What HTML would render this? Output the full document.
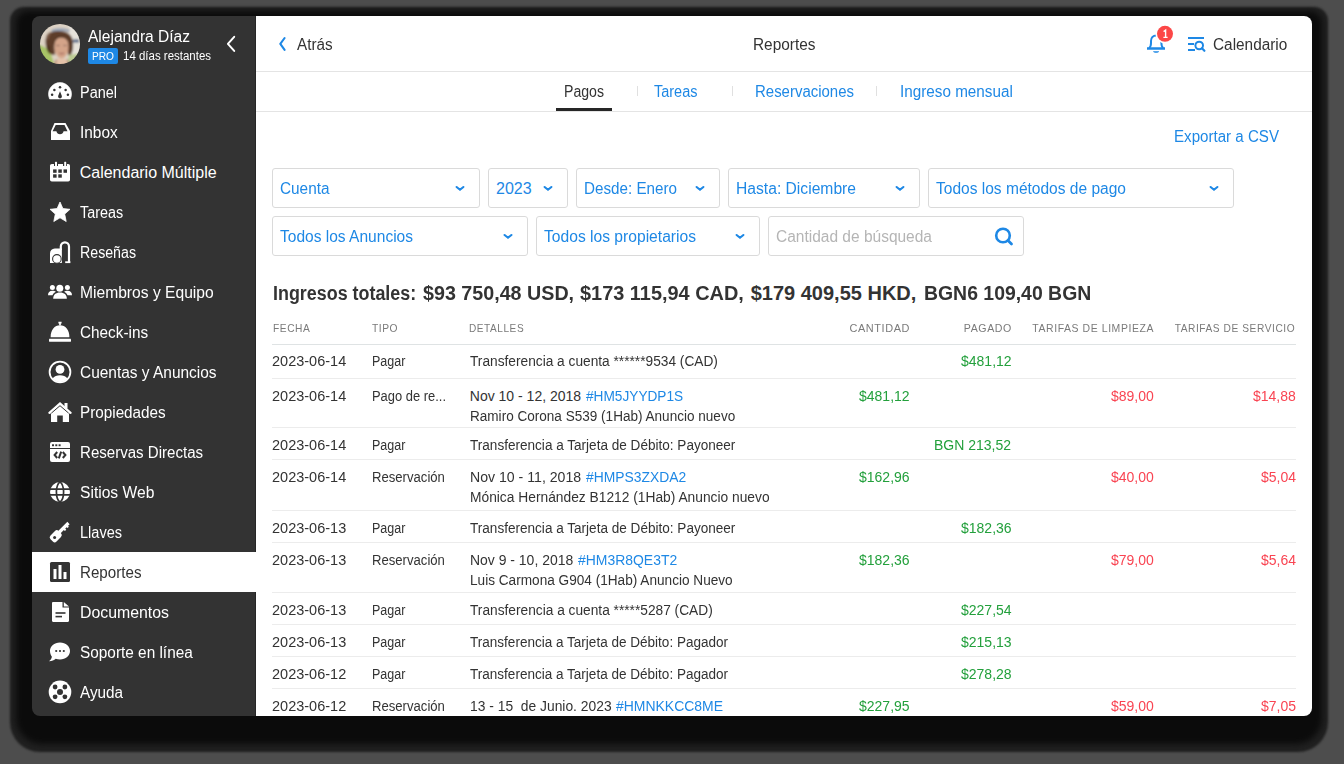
<!DOCTYPE html>
<html><head><meta charset="utf-8">
<style>
*{margin:0;padding:0;box-sizing:border-box}
html,body{width:1344px;height:764px;overflow:hidden;background:#4d4d4d;font-family:"Liberation Sans",sans-serif}
:root{--s0:0.9796;--s1:0.9941;--t1:0.9692;--s2:0.9692;--s3:1.0056;--t3:0.9855;--s4:0.9692;--s5:1.0025;--t5:0.9739;--s6:0.9802;--s7:0.9673;--s8:0.9673;--s9:0.9954;--m:0.9998}
#win{position:absolute;left:32px;top:16px;width:1280px;height:700px;border-radius:8px;overflow:hidden}
#pg{position:absolute;left:-32px;top:-16px;width:1344px;height:764px}
.g{position:absolute}
</style></head><body>
<div class="g" style="left:10px;top:7px;width:1318px;height:745px;border-radius:14px 14px 30px 30px;background:#202020;filter:blur(1px)"></div>
<div class="g" style="left:16px;top:11px;width:1306px;height:733px;border-radius:12px 12px 26px 26px;background:#0b0b0b;filter:blur(3px)"></div>
<div id="win"><div id="pg">
<div style="position:absolute;left:256px;top:16px;width:1056px;height:700px;background:#fff;"></div>
<div style="position:absolute;left:32px;top:16px;width:224px;height:700px;background:#333333;"></div>
<div style="position:absolute;left:255px;top:16px;width:1px;height:700px;background:#262626;"></div>
<div style="position:absolute;left:40px;top:24px;width:40px;height:40px;border-radius:50%;overflow:hidden">
<svg width="40" height="40" viewBox="0 0 40 40">
<defs><filter id="bl" x="-10%" y="-10%" width="120%" height="120%"><feGaussianBlur stdDeviation="0.9"/></filter></defs>
<g filter="url(#bl)">
<rect x="-2" y="-2" width="44" height="44" fill="#ddd2c4"/>
<rect x="29" y="-2" width="13" height="44" fill="#e6e2da"/>
<path d="M-2 21 C3 21 8 25 11 30 L15 42 L-2 42 Z" fill="#a8c466"/>
<path d="M29 31 L42 29 L42 42 L27 42 Z" fill="#bccb92"/>
<rect x="33" y="15.5" width="6" height="3" fill="#556685"/>
<path d="M11 6 C15 3.8 25 3.8 30 6 L29 8 C25 6.5 16 6.5 12 8 Z" fill="#98a4b6"/>
<path d="M5.5 18 C5 10 11 6.5 19 7 C27 7 33 11 33 19 C33.5 24 32.5 29 30.5 31 L28 31 L28 20 C27 15 23 13 19 14 C16 15 14.5 18 14.5 23 L15 31 C12 31 9 30 7.5 27 C6 24 5.6 21 5.5 18 Z" fill="#5d3c29"/>
<path d="M6 13 C7 9 10 7.5 12 8 C10 11 8.5 13 8 17 Z" fill="#7d5b46"/>
<path d="M9 22 C8 24 8.5 27 10 28.5" stroke="#3f2718" stroke-width="1.6" fill="none"/>
<path d="M14.5 23 C14.5 16.5 17.5 13.5 21.5 13.5 C26 13.5 28.5 17 28.5 23 C28.5 29 26 33.5 21.5 34.5 C17 33.5 14.5 29 14.5 23 Z" fill="#d4a489"/>
<path d="M16.5 21.5 L19.5 21.5 M23.5 21.5 L26.5 21.5" stroke="#6e5450" stroke-width="0.9"/>
<path d="M19.5 29 C20.5 29.8 22.5 29.8 24 29" stroke="#9c5a55" stroke-width="1.1" fill="none"/>
<path d="M15 16 C18 12.5 24 12 28 16.5 C26 13 22 11.5 18.5 12.5 C16.5 13 15.5 14.5 15 16 Z" fill="#4a2e1e"/>
<path d="M13 42 C14 36 17 34 21.5 34.5 C26 34 29 36 30 42 Z" fill="#e5c2a9"/>
<path d="M15 41 L16.3 35.5 M27.3 35.5 L28.8 41" stroke="#7a5040" stroke-width="0.8"/>
</g>
</svg></div>
<div style="position:absolute;top:27px;font-size:16px;line-height:20px;color:#fff;white-space:nowrap;left:88.00px;transform:scaleX(0.9719);transform-origin:0 0;">Alejandra Díaz</div>
<div style="position:absolute;left:88px;top:48px;width:29.5px;height:16px;background:#1e88e5;border-radius:2px"></div>
<div style="position:absolute;top:46px;font-size:11px;line-height:20px;color:#fff;white-space:nowrap;left:92.00px;transform:scaleX(0.9229);transform-origin:0 0;">PRO</div>
<div style="position:absolute;top:46px;font-size:12px;line-height:20px;color:#fff;white-space:nowrap;left:122.50px;transform:scaleX(0.9560);transform-origin:0 0;">14 días restantes</div>
<svg style="position:absolute;left:224px;top:34px" width="14" height="20" viewBox="0 0 14 20"><path d="M10.2 2.8 L3.9 9.9 L10.2 16.9" stroke="#fff" stroke-width="2" fill="none" stroke-linecap="round" stroke-linejoin="round"/></svg>
<div style="position:absolute;top:83px;font-size:16px;line-height:20px;color:#fff;white-space:nowrap;left:79.70px;transform:scaleX(0.9040);transform-origin:0 0;">Panel</div>
<svg style="position:absolute;left:48px;top:80px" width="24" height="24" viewBox="0 0 24 24"><path d="M1.6 19 A11.5 11.5 0 1 1 22.4 19 Z" fill="#fff" stroke="#fff" stroke-width="0.6" stroke-linejoin="round"/>
<circle cx="12" cy="7.2" r="1.25" fill="#333333"/><circle cx="6.4" cy="9.9" r="1.25" fill="#333333"/><circle cx="17.6" cy="9.9" r="1.25" fill="#333333"/>
<circle cx="4.1" cy="14.8" r="1.25" fill="#333333"/><circle cx="19.9" cy="14.8" r="1.25" fill="#333333"/>
<path d="M12 11.3 L13.7 15.6 A1.9 1.9 0 1 1 10.3 15.6 Z" fill="#333333"/></svg>
<div style="position:absolute;top:123px;font-size:16px;line-height:20px;color:#fff;white-space:nowrap;left:79.70px;transform:scaleX(0.9633);transform-origin:0 0;">Inbox</div>
<svg style="position:absolute;left:48px;top:120px" width="24" height="24" viewBox="0 0 24 24"><path d="M6.5 3 L17.5 3 L22 11 L22 20 L3 20 L3 11 Z" fill="#fff"/>
<path d="M7.7 5 L16.5 5 L19.5 11.2 L15.6 11.2 C15.2 13 13.8 14.2 12 14.2 C10.2 14.2 8.8 13 8.4 11.2 L4.6 11.2 Z" fill="#333333"/></svg>
<div style="position:absolute;top:163px;font-size:16px;line-height:20px;color:#fff;white-space:nowrap;left:79.70px;">Calendario Múltiple</div>
<svg style="position:absolute;left:48px;top:160px" width="24" height="24" viewBox="0 0 24 24"><rect x="2" y="4" width="20" height="17.5" rx="1.8" fill="#fff"/>

<rect x="5.1" y="9.4" width="3.5" height="3.4" fill="#333333"/><rect x="10.3" y="9.4" width="3.5" height="3.4" fill="#333333"/><rect x="15.5" y="9.4" width="3.5" height="3.4" fill="#333333"/>
<rect x="5.1" y="14.3" width="3.5" height="3.4" fill="#333333"/><rect x="10.3" y="14.3" width="3.5" height="3.4" fill="#333333"/>
<rect x="6" y="3" width="4" height="3" fill="#333333"/><rect x="15" y="3" width="4" height="3" fill="#333333"/>
<rect x="7" y="1.8" width="2" height="5" rx="0.6" fill="#fff"/><rect x="16.2" y="1.8" width="2" height="5" rx="0.6" fill="#fff"/></svg>
<div style="position:absolute;top:203px;font-size:16px;line-height:20px;color:#fff;white-space:nowrap;left:79.70px;transform:scaleX(0.8976);transform-origin:0 0;">Tareas</div>
<svg style="position:absolute;left:48px;top:200px" width="24" height="24" viewBox="0 0 24 24"><path d="M12 2 L14.9 8.6 L22 9.3 L16.7 14.1 L18.2 21.5 L12 17.8 L5.8 21.5 L7.3 14.1 L2 9.3 L9.1 8.6 Z" fill="#fff" stroke="#fff" stroke-width="0.8" stroke-linejoin="round"/></svg>
<div style="position:absolute;top:243px;font-size:16px;line-height:20px;color:#fff;white-space:nowrap;left:79.70px;transform:scaleX(0.8867);transform-origin:0 0;">Reseñas</div>
<svg style="position:absolute;left:48px;top:240px" width="24" height="24" viewBox="0 0 24 24"><path d="M2 23 L2 13.5 C2 10.5 3.8 8.6 6.8 8.4 L13.9 8.4 L13.9 23 Z" fill="#fff"/>
<path d="M12.8 10 L12.8 6.6 C12.8 4 14.6 2.3 16.9 2.3 C19.2 2.3 21 4 21 6.6 L21 22" stroke="#fff" stroke-width="2.2" fill="none"/>
<path d="M17.2 22.2 L22.4 22.2" stroke="#fff" stroke-width="1.8"/>
<circle cx="8.9" cy="18.9" r="4.3" fill="#fff" stroke="#333333" stroke-width="1.1"/></svg>
<div style="position:absolute;top:283px;font-size:16px;line-height:20px;color:#fff;white-space:nowrap;left:79.70px;transform:scaleX(0.9763);transform-origin:0 0;">Miembros y Equipo</div>
<svg style="position:absolute;left:48px;top:280px" width="24" height="24" viewBox="0 0 24 24"><circle cx="11.8" cy="8.3" r="3.5" fill="#fff"/><circle cx="4.4" cy="7.5" r="2.5" fill="#fff"/><circle cx="19.4" cy="7.5" r="2.5" fill="#fff"/>
<path d="M5.2 18.8 C5.2 14.8 7.8 12.6 12 12.6 C16.2 12.6 18.8 14.8 18.8 18.8 Z" fill="#fff"/>
<path d="M0 15.2 C0 12.4 1.6 10.8 4.3 10.8 C5.8 10.8 7 11.2 7.8 11.8 C6.2 12.6 5 13.8 4.5 15.2 Z" fill="#fff"/>
<path d="M24 15.2 C24 12.4 22.4 10.8 19.7 10.8 C18.2 10.8 17 11.2 16.2 11.8 C17.8 12.6 19 13.8 19.5 15.2 Z" fill="#fff"/></svg>
<div style="position:absolute;top:323px;font-size:16px;line-height:20px;color:#fff;white-space:nowrap;left:79.70px;transform:scaleX(0.9573);transform-origin:0 0;">Check-ins</div>
<svg style="position:absolute;left:48px;top:320px" width="24" height="24" viewBox="0 0 24 24"><path d="M10.4 2.6 L13.6 2.6 M12 2.8 L12 5.3" stroke="#fff" stroke-width="1.7"/>
<path d="M2.6 17.2 C2.6 9.8 6.6 5.2 12 5.2 C17.4 5.2 21.4 9.8 21.4 17.2 Z" fill="#fff"/>
<rect x="1" y="18.8" width="22" height="2.9" rx="0.4" fill="#fff"/></svg>
<div style="position:absolute;top:363px;font-size:16px;line-height:20px;color:#fff;white-space:nowrap;left:79.70px;transform:scaleX(0.9659);transform-origin:0 0;">Cuentas y Anuncios</div>
<svg style="position:absolute;left:48px;top:360px" width="24" height="24" viewBox="0 0 24 24"><circle cx="12" cy="12" r="10.4" fill="none" stroke="#fff" stroke-width="1.8"/>
<circle cx="12" cy="9.4" r="4.4" fill="#fff"/>
<path d="M4.6 18.6 C6.2 16 9 15.3 12 15.3 C15 15.3 17.8 16 19.4 18.6 C17.4 20.9 14.9 22.2 12 22.2 C9.1 22.2 6.6 20.9 4.6 18.6 Z" fill="#fff"/></svg>
<div style="position:absolute;top:403px;font-size:16px;line-height:20px;color:#fff;white-space:nowrap;left:79.70px;transform:scaleX(0.9539);transform-origin:0 0;">Propiedades</div>
<svg style="position:absolute;left:48px;top:400px" width="24" height="24" viewBox="0 0 24 24"><path d="M12 3.6 L21 11.4 L21 22 L14.8 22 L14.8 15.5 L9.2 15.5 L9.2 22 L3 22 L3 11.4 Z" fill="#fff"/>
<path d="M1.5 12.8 L12 3.5 L22.5 12.8" stroke="#fff" stroke-width="2.4" fill="none" stroke-linecap="round"/>
<rect x="16.5" y="3" width="3" height="5.5" fill="#fff"/>
<path d="M3.3 13.2 L12 5.7 L20.7 13.2" stroke="#333333" stroke-width="1" fill="none"/></svg>
<div style="position:absolute;top:443px;font-size:16px;line-height:20px;color:#fff;white-space:nowrap;left:79.70px;transform:scaleX(0.9418);transform-origin:0 0;">Reservas Directas</div>
<svg style="position:absolute;left:48px;top:440px" width="24" height="24" viewBox="0 0 24 24"><rect x="2" y="2" width="20" height="20" rx="2" fill="#fff"/>
<rect x="2" y="8" width="20" height="1" fill="#333333"/>
<rect x="4" y="4.3" width="2" height="1.9" fill="#333333"/><rect x="7.3" y="4.3" width="2" height="1.9" fill="#333333"/><rect x="10.6" y="4.3" width="2" height="1.9" fill="#333333"/>
<path d="M9.2 12 L6.6 15 L9.2 18 M14.8 12 L17.4 15 L14.8 18 M13.2 11.6 L10.8 18.4" stroke="#333333" stroke-width="2" fill="none"/></svg>
<div style="position:absolute;top:483px;font-size:16px;line-height:20px;color:#fff;white-space:nowrap;left:79.70px;transform:scaleX(0.9754);transform-origin:0 0;">Sitios Web</div>
<svg style="position:absolute;left:48px;top:480px" width="24" height="24" viewBox="0 0 24 24"><circle cx="12" cy="12" r="10" fill="#fff"/>
<path d="M2 9.2 L22 9.2 M2 14.8 L22 14.8" stroke="#333333" stroke-width="1.7"/>
<path d="M12 1.8 C7.2 5.5 7.2 18.5 12 22.2 M12 1.8 C16.8 5.5 16.8 18.5 12 22.2" stroke="#333333" stroke-width="1.7" fill="none"/></svg>
<div style="position:absolute;top:523px;font-size:16px;line-height:20px;color:#fff;white-space:nowrap;left:79.70px;transform:scaleX(0.9080);transform-origin:0 0;">Llaves</div>
<svg style="position:absolute;left:48px;top:520px" width="24" height="24" viewBox="0 0 24 24"><rect x="3.5" y="10.5" width="8.5" height="11.5" rx="2.6" transform="rotate(45 7.75 16.25)" fill="#fff"/>
<path d="M9.5 14 L20.5 3" stroke="#fff" stroke-width="3.2"/>
<path d="M15 7.8 L17.6 10.4 M17.8 5 L20.2 7.4" stroke="#fff" stroke-width="2"/>
<circle cx="6.6" cy="17.4" r="1.5" fill="#333333"/></svg>
<div style="position:absolute;left:32px;top:552px;width:224px;height:40px;background:#fff;"></div>
<div style="position:absolute;top:563px;font-size:16px;line-height:20px;color:#333;white-space:nowrap;left:79.70px;transform:scaleX(0.9472);transform-origin:0 0;">Reportes</div>
<svg style="position:absolute;left:48px;top:560px" width="24" height="24" viewBox="0 0 24 24"><rect x="2" y="2" width="20" height="20" rx="1.5" fill="#333"/>
<rect x="5.5" y="9" width="3" height="10" fill="#fff"/><rect x="10.5" y="5" width="3" height="14" fill="#fff"/><rect x="15.5" y="12" width="3" height="7" fill="#fff"/></svg>
<div style="position:absolute;top:603px;font-size:16px;line-height:20px;color:#fff;white-space:nowrap;left:79.70px;transform:scaleX(0.9908);transform-origin:0 0;">Documentos</div>
<svg style="position:absolute;left:48px;top:600px" width="24" height="24" viewBox="0 0 24 24"><path d="M4 3.2 C4 2.5 4.5 2 5.2 2 L14.5 2 L14.5 7.5 L21 7.5 L21 20.8 C21 21.5 20.5 22 19.8 22 L5.2 22 C4.5 22 4 21.5 4 20.8 Z" fill="#fff"/>
<path d="M15.8 2 L21 6.5 L15.8 6.5 Z" fill="#fff"/>
<rect x="7.5" y="12.2" width="10" height="1.6" fill="#333333"/><rect x="7.5" y="15.8" width="6.5" height="1.6" fill="#333333"/></svg>
<div style="position:absolute;top:643px;font-size:16px;line-height:20px;color:#fff;white-space:nowrap;left:79.70px;transform:scaleX(0.9605);transform-origin:0 0;">Soporte en línea</div>
<svg style="position:absolute;left:48px;top:640px" width="24" height="24" viewBox="0 0 24 24"><path d="M12 2.5 C17.8 2.5 22 6.3 22 11 C22 15.7 17.8 19.5 12 19.5 C10.4 19.5 9 19.2 7.7 18.7 C6.2 20 4 21 1 21.2 C2.6 19.9 3.6 18.4 3.9 16.7 C2.7 15.1 2 13.1 2 11 C2 6.3 6.2 2.5 12 2.5 Z" fill="#fff"/>
<circle cx="8.2" cy="11" r="1.1" fill="#333333"/><circle cx="12" cy="11" r="1.1" fill="#333333"/><circle cx="15.8" cy="11" r="1.1" fill="#333333"/></svg>
<div style="position:absolute;top:683px;font-size:16px;line-height:20px;color:#fff;white-space:nowrap;left:79.70px;transform:scaleX(0.9559);transform-origin:0 0;">Ayuda</div>
<svg style="position:absolute;left:48px;top:680px" width="24" height="24" viewBox="0 0 24 24"><circle cx="12" cy="11.9" r="11.3" fill="#fff"/>
<circle cx="12" cy="11.9" r="3" fill="#333333"/>
<ellipse cx="7.1" cy="7" rx="2.4" ry="2.4" fill="#333333"/><ellipse cx="16.9" cy="7" rx="2.4" ry="2.4" fill="#333333"/><ellipse cx="7.1" cy="16.8" rx="2.4" ry="2.4" fill="#333333"/><ellipse cx="16.9" cy="16.8" rx="2.4" ry="2.4" fill="#333333"/></svg>
<div style="position:absolute;left:256px;top:71px;width:1056px;height:1px;background:#e4e4e4;"></div>
<div style="position:absolute;left:256px;top:111px;width:1056px;height:1px;background:#e4e4e4;"></div>
<svg style="position:absolute;left:276px;top:35px" width="14" height="18" viewBox="0 0 14 18"><path d="M8.6 3 L4.3 8.9 L8.6 14.8" stroke="#1e88e5" stroke-width="2.1" fill="none" stroke-linecap="round" stroke-linejoin="round"/></svg>
<div style="position:absolute;top:35px;font-size:16px;line-height:20px;color:#333;white-space:nowrap;left:296.60px;transform:scaleX(0.9533);transform-origin:0 0;">Atrás</div>
<div style="position:absolute;top:35px;font-size:16px;line-height:20px;color:#333;white-space:nowrap;left:752.50px;transform:scaleX(0.9626);transform-origin:0 0;">Reportes</div>
<svg style="position:absolute;left:1140px;top:20px" width="40" height="40" viewBox="0 0 40 40">
<path d="M7 28.5 L25 28.5" stroke="#1e88e5" stroke-width="2.6"/>
<path d="M9 28 C10.5 27 11 25.5 11 23 L11 21 C11 17.8 13.2 15.5 16.2 15.5 C19.2 15.5 21.4 17.8 21.4 21 L21.4 23 C21.4 25.5 21.8 27 23.3 28" stroke="#1e88e5" stroke-width="2" fill="none"/>
<path d="M13 31.2 L19.2 31.2 C18.4 33.2 13.8 33.2 13 31.2 Z" fill="#1e88e5"/>
<circle cx="25" cy="13.8" r="9.6" fill="#fff"/>
<circle cx="25" cy="13.8" r="8" fill="#fc4747"/>
<path d="M23.6 11.6 L25.6 10.2 L25.6 17.4 M23.4 17.4 L27.6 17.4" stroke="#fff" stroke-width="1.4" fill="none"/>
</svg>
<svg style="position:absolute;left:1186px;top:34px" width="22" height="20" viewBox="0 0 22 20">
<path d="M2 4 L18 4 M2 9.9 L8 9.9 M2 15.9 L9 15.9" stroke="#1e88e5" stroke-width="2"/>
<circle cx="13.2" cy="11.5" r="3.8" stroke="#1e88e5" stroke-width="2" fill="none"/>
<path d="M16 14.3 L18.4 16.8" stroke="#1e88e5" stroke-width="2.2" stroke-linecap="round"/>
</svg>
<div style="position:absolute;top:35px;font-size:16px;line-height:20px;color:#333;white-space:nowrap;left:1213.00px;transform:scaleX(0.9602);transform-origin:0 0;">Calendario</div>
<div style="position:absolute;top:82px;font-size:16px;line-height:20px;color:#333;white-space:nowrap;left:564.00px;transform:scaleX(0.8818);transform-origin:0 0;">Pagos</div>
<div style="position:absolute;left:556px;top:108px;width:56px;height:3px;background:#262626;"></div>
<div style="position:absolute;left:636.5px;top:86px;width:1.0px;height:10px;background:#e0e0e0;"></div>
<div style="position:absolute;top:82px;font-size:16px;line-height:20px;color:#1e88e5;white-space:nowrap;left:654.40px;transform:scaleX(0.9039);transform-origin:0 0;">Tareas</div>
<div style="position:absolute;left:732px;top:86px;width:1px;height:10px;background:#e0e0e0;"></div>
<div style="position:absolute;top:82px;font-size:16px;line-height:20px;color:#1e88e5;white-space:nowrap;left:755.00px;transform:scaleX(0.9355);transform-origin:0 0;">Reservaciones</div>
<div style="position:absolute;left:876px;top:86px;width:1px;height:10px;background:#e0e0e0;"></div>
<div style="position:absolute;top:82px;font-size:16px;line-height:20px;color:#1e88e5;white-space:nowrap;left:899.60px;transform:scaleX(0.9536);transform-origin:0 0;">Ingreso mensual</div>
<div style="position:absolute;top:127px;font-size:16px;line-height:20px;color:#1e88e5;white-space:nowrap;left:1173.60px;transform:scaleX(0.9447);transform-origin:0 0;">Exportar a CSV</div>
<div style="position:absolute;left:272px;top:168px;width:208px;height:40px;border:1px solid #dadada;border-radius:3px;background:#fff"></div>
<div style="position:absolute;top:179px;font-size:16px;line-height:20px;color:#1e88e5;white-space:nowrap;left:280.00px;transform:scaleX(0.9593);transform-origin:0 0;">Cuenta</div>
<svg style="position:absolute;left:454px;top:182px" width="12" height="10" viewBox="0 0 12 10"><path d="M2.6 5 L6 7.8 L9.4 5" stroke="#1e88e5" stroke-width="2.1" fill="none" stroke-linecap="round" stroke-linejoin="round"/></svg>
<div style="position:absolute;left:488px;top:168px;width:80px;height:40px;border:1px solid #dadada;border-radius:3px;background:#fff"></div>
<div style="position:absolute;top:179px;font-size:16px;line-height:20px;color:#1e88e5;white-space:nowrap;left:496.00px;">2023</div>
<svg style="position:absolute;left:542px;top:182px" width="12" height="10" viewBox="0 0 12 10"><path d="M2.6 5 L6 7.8 L9.4 5" stroke="#1e88e5" stroke-width="2.1" fill="none" stroke-linecap="round" stroke-linejoin="round"/></svg>
<div style="position:absolute;left:576px;top:168px;width:144px;height:40px;border:1px solid #dadada;border-radius:3px;background:#fff"></div>
<div style="position:absolute;top:179px;font-size:16px;line-height:20px;color:#1e88e5;white-space:nowrap;left:584.00px;transform:scaleX(0.9505);transform-origin:0 0;">Desde: Enero</div>
<svg style="position:absolute;left:694px;top:182px" width="12" height="10" viewBox="0 0 12 10"><path d="M2.6 5 L6 7.8 L9.4 5" stroke="#1e88e5" stroke-width="2.1" fill="none" stroke-linecap="round" stroke-linejoin="round"/></svg>
<div style="position:absolute;left:728px;top:168px;width:192px;height:40px;border:1px solid #dadada;border-radius:3px;background:#fff"></div>
<div style="position:absolute;top:179px;font-size:16px;line-height:20px;color:#1e88e5;white-space:nowrap;left:736.00px;transform:scaleX(0.9780);transform-origin:0 0;">Hasta: Diciembre</div>
<svg style="position:absolute;left:894px;top:182px" width="12" height="10" viewBox="0 0 12 10"><path d="M2.6 5 L6 7.8 L9.4 5" stroke="#1e88e5" stroke-width="2.1" fill="none" stroke-linecap="round" stroke-linejoin="round"/></svg>
<div style="position:absolute;left:928px;top:168px;width:306px;height:40px;border:1px solid #dadada;border-radius:3px;background:#fff"></div>
<div style="position:absolute;top:179px;font-size:16px;line-height:20px;color:#1e88e5;white-space:nowrap;left:936.00px;transform:scaleX(0.9709);transform-origin:0 0;">Todos los métodos de pago</div>
<svg style="position:absolute;left:1208px;top:182px" width="12" height="10" viewBox="0 0 12 10"><path d="M2.6 5 L6 7.8 L9.4 5" stroke="#1e88e5" stroke-width="2.1" fill="none" stroke-linecap="round" stroke-linejoin="round"/></svg>
<div style="position:absolute;left:272px;top:216px;width:256px;height:40px;border:1px solid #dadada;border-radius:3px;background:#fff"></div>
<div style="position:absolute;top:227px;font-size:16px;line-height:20px;color:#1e88e5;white-space:nowrap;left:280.00px;transform:scaleX(0.9710);transform-origin:0 0;">Todos los Anuncios</div>
<svg style="position:absolute;left:502px;top:230px" width="12" height="10" viewBox="0 0 12 10"><path d="M2.6 5 L6 7.8 L9.4 5" stroke="#1e88e5" stroke-width="2.1" fill="none" stroke-linecap="round" stroke-linejoin="round"/></svg>
<div style="position:absolute;left:536px;top:216px;width:224px;height:40px;border:1px solid #dadada;border-radius:3px;background:#fff"></div>
<div style="position:absolute;top:227px;font-size:16px;line-height:20px;color:#1e88e5;white-space:nowrap;left:544.00px;transform:scaleX(0.9766);transform-origin:0 0;">Todos los propietarios</div>
<svg style="position:absolute;left:734px;top:230px" width="12" height="10" viewBox="0 0 12 10"><path d="M2.6 5 L6 7.8 L9.4 5" stroke="#1e88e5" stroke-width="2.1" fill="none" stroke-linecap="round" stroke-linejoin="round"/></svg>
<div style="position:absolute;left:768px;top:216px;width:256px;height:40px;border:1px solid #dadada;border-radius:3px;background:#fff"></div>
<div style="position:absolute;top:227px;font-size:16px;line-height:20px;color:#b5b5b5;white-space:nowrap;left:776.00px;transform:scaleX(0.9687);transform-origin:0 0;">Cantidad de búsqueda</div>
<svg style="position:absolute;left:992px;top:226px" width="24" height="22" viewBox="0 0 24 22"><circle cx="11" cy="9.5" r="6.8" stroke="#1e88e5" stroke-width="2.6" fill="none"/><path d="M16 14.5 L19.5 18" stroke="#1e88e5" stroke-width="2.8" stroke-linecap="round"/></svg>
<div style="position:absolute;top:283px;font-size:20px;line-height:20px;color:#333;white-space:nowrap;font-weight:bold;left:272.90px;transform:scaleX(0.8948);transform-origin:0 0;">Ingresos totales:</div>
<div style="position:absolute;top:283px;font-size:20px;line-height:20px;color:#333;white-space:nowrap;font-weight:bold;left:422.90px;transform:scaleX(0.9847);transform-origin:0 0;">$93 750,48 USD,</div>
<div style="position:absolute;top:283px;font-size:20px;line-height:20px;color:#333;white-space:nowrap;font-weight:bold;left:580.20px;transform:scaleX(0.9960);transform-origin:0 0;">$173 115,94 CAD,</div>
<div style="position:absolute;top:283px;font-size:20px;line-height:20px;color:#333;white-space:nowrap;font-weight:bold;left:750.70px;">$179 409,55 HKD,</div>
<div style="position:absolute;top:283px;font-size:20px;line-height:20px;color:#333;white-space:nowrap;font-weight:bold;left:923.75px;transform:scaleX(0.9707);transform-origin:0 0;">BGN6 109,40 BGN</div>
<div style="position:absolute;top:318px;font-size:11px;line-height:20px;color:#7a7a7a;white-space:nowrap;letter-spacing:0.6px;left:272.70px;transform:scaleX(0.9274);transform-origin:0 0;">FECHA</div>
<div style="position:absolute;top:318px;font-size:11px;line-height:20px;color:#7a7a7a;white-space:nowrap;letter-spacing:0.6px;left:372.20px;transform:scaleX(0.9318);transform-origin:0 0;">TIPO</div>
<div style="position:absolute;top:318px;font-size:11px;line-height:20px;color:#7a7a7a;white-space:nowrap;letter-spacing:0.6px;left:469.20px;transform:scaleX(0.9157);transform-origin:0 0;">DETALLES</div>
<div style="position:absolute;top:318px;font-size:11px;line-height:20px;color:#7a7a7a;white-space:nowrap;letter-spacing:0.6px;right:434.20px;transform:scaleX(0.9930);transform-origin:100% 0;">CANTIDAD</div>
<div style="position:absolute;top:318px;font-size:11px;line-height:20px;color:#7a7a7a;white-space:nowrap;letter-spacing:0.6px;right:332.40px;transform:scaleX(0.9644);transform-origin:100% 0;">PAGADO</div>
<div style="position:absolute;top:318px;font-size:11px;line-height:20px;color:#7a7a7a;white-space:nowrap;letter-spacing:0.6px;right:190.00px;transform:scaleX(0.9502);transform-origin:100% 0;">TARIFAS DE LIMPIEZA</div>
<div style="position:absolute;top:318px;font-size:11px;line-height:20px;color:#7a7a7a;white-space:nowrap;letter-spacing:0.6px;right:48.40px;transform:scaleX(0.9260);transform-origin:100% 0;">TARIFAS DE SERVICIO</div>
<div style="position:absolute;left:272px;top:344px;width:1024px;height:1px;background:#dfe3e4;"></div>
<div style="position:absolute;top:351px;font-size:14px;line-height:20px;color:#333;white-space:nowrap;left:272.30px;transform:scaleX(1.0362);transform-origin:0 0;">2023-06-14</div>
<div style="position:absolute;top:351px;font-size:14px;line-height:20px;color:#333;white-space:nowrap;left:371.90px;transform:scaleX(0.8942);transform-origin:0 0;">Pagar</div>
<div style="position:absolute;top:351px;font-size:14px;line-height:20px;color:#333;white-space:nowrap;left:469.60px;transform:scaleX(0.9792);transform-origin:0 0;">Transferencia a cuenta ******9534 (CAD)</div>
<div style="position:absolute;top:351px;font-size:14px;line-height:20px;color:#23a03c;white-space:nowrap;right:332.50px;transform:scaleX(var(--m));transform-origin:100% 0;">$481,12</div>
<div style="position:absolute;left:272px;top:378px;width:1024px;height:1px;background:#ececec;"></div>
<div style="position:absolute;top:386px;font-size:14px;line-height:20px;color:#333;white-space:nowrap;left:272.30px;transform:scaleX(1.0362);transform-origin:0 0;">2023-06-14</div>
<div style="position:absolute;top:386px;font-size:14px;line-height:20px;color:#333;white-space:nowrap;left:371.90px;transform:scaleX(0.9231);transform-origin:0 0;">Pago de re...</div>
<div style="position:absolute;top:386px;font-size:14px;line-height:20px;color:#333;white-space:nowrap;left:469.80px;">Nov 10 - 12, 2018</div>
<div style="position:absolute;top:386px;font-size:14px;line-height:20px;color:#1e88e5;white-space:nowrap;left:585.80px;transform:scaleX(0.9759);transform-origin:0 0;">#HM5JYYDP1S</div>
<div style="position:absolute;top:406px;font-size:14px;line-height:20px;color:#333;white-space:nowrap;left:469.80px;transform:scaleX(0.9681);transform-origin:0 0;">Ramiro Corona S539 (1Hab) Anuncio nuevo</div>
<div style="position:absolute;top:386px;font-size:14px;line-height:20px;color:#23a03c;white-space:nowrap;right:434.00px;transform:scaleX(var(--m));transform-origin:100% 0;">$481,12</div>
<div style="position:absolute;top:386px;font-size:14px;line-height:20px;color:#f94452;white-space:nowrap;right:190.01px;transform:scaleX(var(--m));transform-origin:100% 0;">$89,00</div>
<div style="position:absolute;top:386px;font-size:14px;line-height:20px;color:#f94452;white-space:nowrap;right:48.01px;transform:scaleX(var(--m));transform-origin:100% 0;">$14,88</div>
<div style="position:absolute;left:272px;top:427px;width:1024px;height:1px;background:#ececec;"></div>
<div style="position:absolute;top:435px;font-size:14px;line-height:20px;color:#333;white-space:nowrap;left:272.30px;transform:scaleX(1.0362);transform-origin:0 0;">2023-06-14</div>
<div style="position:absolute;top:435px;font-size:14px;line-height:20px;color:#333;white-space:nowrap;left:371.90px;transform:scaleX(0.8942);transform-origin:0 0;">Pagar</div>
<div style="position:absolute;top:435px;font-size:14px;line-height:20px;color:#333;white-space:nowrap;left:469.60px;transform:scaleX(0.9688);transform-origin:0 0;">Transferencia a Tarjeta de Débito: Payoneer</div>
<div style="position:absolute;top:435px;font-size:14px;line-height:20px;color:#23a03c;white-space:nowrap;right:332.49px;transform:scaleX(var(--m));transform-origin:100% 0;">BGN 213,52</div>
<div style="position:absolute;left:272px;top:459px;width:1024px;height:1px;background:#ececec;"></div>
<div style="position:absolute;top:467px;font-size:14px;line-height:20px;color:#333;white-space:nowrap;left:272.30px;transform:scaleX(1.0362);transform-origin:0 0;">2023-06-14</div>
<div style="position:absolute;top:467px;font-size:14px;line-height:20px;color:#333;white-space:nowrap;left:371.90px;transform:scaleX(0.9369);transform-origin:0 0;">Reservación</div>
<div style="position:absolute;top:467px;font-size:14px;line-height:20px;color:#333;white-space:nowrap;left:469.80px;transform:scaleX(1.0076);transform-origin:0 0;">Nov 10 - 11, 2018</div>
<div style="position:absolute;top:467px;font-size:14px;line-height:20px;color:#1e88e5;white-space:nowrap;left:585.80px;transform:scaleX(0.9906);transform-origin:0 0;">#HMPS3ZXDA2</div>
<div style="position:absolute;top:487px;font-size:14px;line-height:20px;color:#333;white-space:nowrap;left:469.80px;transform:scaleX(0.9845);transform-origin:0 0;">Mónica Hernández B1212 (1Hab) Anuncio nuevo</div>
<div style="position:absolute;top:467px;font-size:14px;line-height:20px;color:#23a03c;white-space:nowrap;right:434.00px;transform:scaleX(var(--m));transform-origin:100% 0;">$162,96</div>
<div style="position:absolute;top:467px;font-size:14px;line-height:20px;color:#f94452;white-space:nowrap;right:190.01px;transform:scaleX(var(--m));transform-origin:100% 0;">$40,00</div>
<div style="position:absolute;top:467px;font-size:14px;line-height:20px;color:#f94452;white-space:nowrap;right:47.99px;transform:scaleX(var(--m));transform-origin:100% 0;">$5,04</div>
<div style="position:absolute;left:272px;top:510px;width:1024px;height:1px;background:#ececec;"></div>
<div style="position:absolute;top:518px;font-size:14px;line-height:20px;color:#333;white-space:nowrap;left:272.30px;transform:scaleX(1.0362);transform-origin:0 0;">2023-06-13</div>
<div style="position:absolute;top:518px;font-size:14px;line-height:20px;color:#333;white-space:nowrap;left:371.90px;transform:scaleX(0.8942);transform-origin:0 0;">Pagar</div>
<div style="position:absolute;top:518px;font-size:14px;line-height:20px;color:#333;white-space:nowrap;left:469.60px;transform:scaleX(0.9688);transform-origin:0 0;">Transferencia a Tarjeta de Débito: Payoneer</div>
<div style="position:absolute;top:518px;font-size:14px;line-height:20px;color:#23a03c;white-space:nowrap;right:332.50px;transform:scaleX(var(--m));transform-origin:100% 0;">$182,36</div>
<div style="position:absolute;left:272px;top:542px;width:1024px;height:1px;background:#ececec;"></div>
<div style="position:absolute;top:550px;font-size:14px;line-height:20px;color:#333;white-space:nowrap;left:272.30px;transform:scaleX(1.0362);transform-origin:0 0;">2023-06-13</div>
<div style="position:absolute;top:550px;font-size:14px;line-height:20px;color:#333;white-space:nowrap;left:371.90px;transform:scaleX(0.9369);transform-origin:0 0;">Reservación</div>
<div style="position:absolute;top:550px;font-size:14px;line-height:20px;color:#333;white-space:nowrap;left:469.80px;transform:scaleX(0.9969);transform-origin:0 0;">Nov 9 - 10, 2018</div>
<div style="position:absolute;top:550px;font-size:14px;line-height:20px;color:#1e88e5;white-space:nowrap;left:577.80px;transform:scaleX(0.9960);transform-origin:0 0;">#HM3R8QE3T2</div>
<div style="position:absolute;top:570px;font-size:14px;line-height:20px;color:#333;white-space:nowrap;left:469.80px;transform:scaleX(0.9728);transform-origin:0 0;">Luis Carmona G904 (1Hab) Anuncio Nuevo</div>
<div style="position:absolute;top:550px;font-size:14px;line-height:20px;color:#23a03c;white-space:nowrap;right:434.00px;transform:scaleX(var(--m));transform-origin:100% 0;">$182,36</div>
<div style="position:absolute;top:550px;font-size:14px;line-height:20px;color:#f94452;white-space:nowrap;right:190.01px;transform:scaleX(var(--m));transform-origin:100% 0;">$79,00</div>
<div style="position:absolute;top:550px;font-size:14px;line-height:20px;color:#f94452;white-space:nowrap;right:47.99px;transform:scaleX(var(--m));transform-origin:100% 0;">$5,64</div>
<div style="position:absolute;left:272px;top:592px;width:1024px;height:1px;background:#ececec;"></div>
<div style="position:absolute;top:600px;font-size:14px;line-height:20px;color:#333;white-space:nowrap;left:272.30px;transform:scaleX(1.0362);transform-origin:0 0;">2023-06-13</div>
<div style="position:absolute;top:600px;font-size:14px;line-height:20px;color:#333;white-space:nowrap;left:371.90px;transform:scaleX(0.8942);transform-origin:0 0;">Pagar</div>
<div style="position:absolute;top:600px;font-size:14px;line-height:20px;color:#333;white-space:nowrap;left:469.60px;transform:scaleX(0.9798);transform-origin:0 0;">Transferencia a cuenta *****5287 (CAD)</div>
<div style="position:absolute;top:600px;font-size:14px;line-height:20px;color:#23a03c;white-space:nowrap;right:332.50px;transform:scaleX(var(--m));transform-origin:100% 0;">$227,54</div>
<div style="position:absolute;left:272px;top:624px;width:1024px;height:1px;background:#ececec;"></div>
<div style="position:absolute;top:632px;font-size:14px;line-height:20px;color:#333;white-space:nowrap;left:272.30px;transform:scaleX(1.0362);transform-origin:0 0;">2023-06-13</div>
<div style="position:absolute;top:632px;font-size:14px;line-height:20px;color:#333;white-space:nowrap;left:371.90px;transform:scaleX(0.8942);transform-origin:0 0;">Pagar</div>
<div style="position:absolute;top:632px;font-size:14px;line-height:20px;color:#333;white-space:nowrap;left:469.60px;transform:scaleX(0.9669);transform-origin:0 0;">Transferencia a Tarjeta de Débito: Pagador</div>
<div style="position:absolute;top:632px;font-size:14px;line-height:20px;color:#23a03c;white-space:nowrap;right:332.50px;transform:scaleX(var(--m));transform-origin:100% 0;">$215,13</div>
<div style="position:absolute;left:272px;top:656px;width:1024px;height:1px;background:#ececec;"></div>
<div style="position:absolute;top:664px;font-size:14px;line-height:20px;color:#333;white-space:nowrap;left:272.30px;transform:scaleX(1.0362);transform-origin:0 0;">2023-06-12</div>
<div style="position:absolute;top:664px;font-size:14px;line-height:20px;color:#333;white-space:nowrap;left:371.90px;transform:scaleX(0.8942);transform-origin:0 0;">Pagar</div>
<div style="position:absolute;top:664px;font-size:14px;line-height:20px;color:#333;white-space:nowrap;left:469.60px;transform:scaleX(0.9669);transform-origin:0 0;">Transferencia a Tarjeta de Débito: Pagador</div>
<div style="position:absolute;top:664px;font-size:14px;line-height:20px;color:#23a03c;white-space:nowrap;right:332.50px;transform:scaleX(var(--m));transform-origin:100% 0;">$278,28</div>
<div style="position:absolute;left:272px;top:688px;width:1024px;height:1px;background:#ececec;"></div>
<div style="position:absolute;top:696px;font-size:14px;line-height:20px;color:#333;white-space:nowrap;left:272.30px;transform:scaleX(1.0362);transform-origin:0 0;">2023-06-12</div>
<div style="position:absolute;top:696px;font-size:14px;line-height:20px;color:#333;white-space:nowrap;left:371.90px;transform:scaleX(0.9369);transform-origin:0 0;">Reservación</div>
<div style="position:absolute;top:696px;font-size:14px;line-height:20px;color:#333;white-space:nowrap;left:469.80px;transform:scaleX(0.9887);transform-origin:0 0;">13 - 15 &nbsp;de Junio. 2023</div>
<div style="position:absolute;top:696px;font-size:14px;line-height:20px;color:#1e88e5;white-space:nowrap;left:615.80px;transform:scaleX(0.9967);transform-origin:0 0;">#HMNKKCC8ME</div>
<div style="position:absolute;top:696px;font-size:14px;line-height:20px;color:#23a03c;white-space:nowrap;right:434.00px;transform:scaleX(var(--m));transform-origin:100% 0;">$227,95</div>
<div style="position:absolute;top:696px;font-size:14px;line-height:20px;color:#f94452;white-space:nowrap;right:190.01px;transform:scaleX(var(--m));transform-origin:100% 0;">$59,00</div>
<div style="position:absolute;top:696px;font-size:14px;line-height:20px;color:#f94452;white-space:nowrap;right:47.99px;transform:scaleX(var(--m));transform-origin:100% 0;">$7,05</div>
</div></div>
</body></html>
